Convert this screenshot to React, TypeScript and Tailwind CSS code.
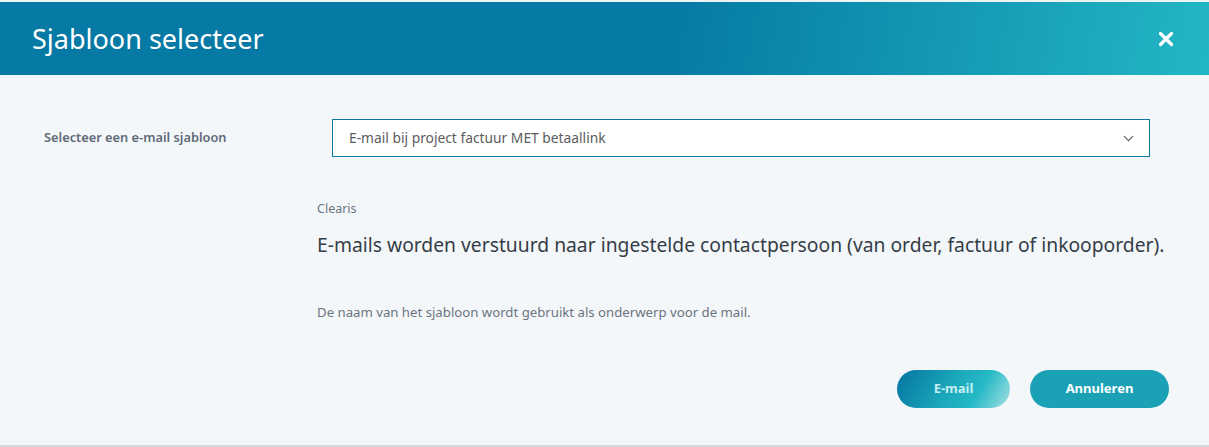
import { X, ChevronDown } from 'lucide-react'

export default function App() {
    return (
        <div className="w-[1209px] h-[447px] bg-[#f4f7fa] flex flex-col [font-family:'Noto_Sans',sans-serif] overflow-hidden">
            <div className="h-[2px] bg-[#eef3f6]" />
            <div className="h-[73px] flex items-center justify-between pl-[32px] pr-[32px] bg-[linear-gradient(100deg,#0679a4_0%,#0679a4_55%,#22b7c4_100%)]">
                <h1 className="text-[27px] text-white tracking-[0] leading-none pb-[1px]">Sjabloon selecteer</h1>
                <X className="text-white w-[22px] h-[22px]" strokeWidth={3.5} />
            </div>

            <div className="flex-1 flex flex-col">
                <div className="flex items-center pt-[44px]">
                    <div className="w-[317px] pl-[44px] text-[12.8px] font-semibold text-[#5f6a78]">
                        Selecteer een e-mail sjabloon
                    </div>
                    <div className="ml-[15px] w-[818px] h-[38px] bg-white border border-[#0a7aa0] flex items-center justify-between pl-[16px] pr-[12px]">
                        <span className="text-[13.8px] text-[#5c5c5c]">E-mail bij project factuur MET betaallink</span>
                        <ChevronDown className="w-[17px] h-[17px] text-[#555]" strokeWidth={1.5} />
                    </div>
                </div>

                <div className="pl-[317px] pt-[43px] flex flex-col">
                    <div className="text-[12.5px] text-[#6b7480] leading-[18px]">Clearis</div>
                    <div className="text-[19.3px] text-[#343d47] mt-[15px] leading-[24px] whitespace-nowrap">
                        E-mails worden verstuurd naar ingestelde contactpersoon (van order, factuur of inkooporder).
                    </div>
                    <div className="text-[13.2px] text-[#6b7480] mt-[46px] leading-[18px]">
                        De naam van het sjabloon wordt gebruikt als onderwerp voor de mail.
                    </div>
                </div>

                <div className="flex justify-end gap-[20px] pr-[40px] mt-[49px]">
                    <button className="w-[113px] h-[38px] rounded-full text-[13px] font-bold text-[#c6edf1] bg-[linear-gradient(120deg,#0574a0_0%,#1aa6ba_45%,#25b9c6_70%,#a8e0e3_100%)]">
                        E-mail
                    </button>
                    <button className="w-[139px] h-[38px] rounded-full text-[13px] font-bold text-white bg-[#1aa1b5]">
                        Annuleren
                    </button>
                </div>
            </div>
            <div className="h-[2px] bg-[#d8d8d8]" />
        </div>
    )
}
